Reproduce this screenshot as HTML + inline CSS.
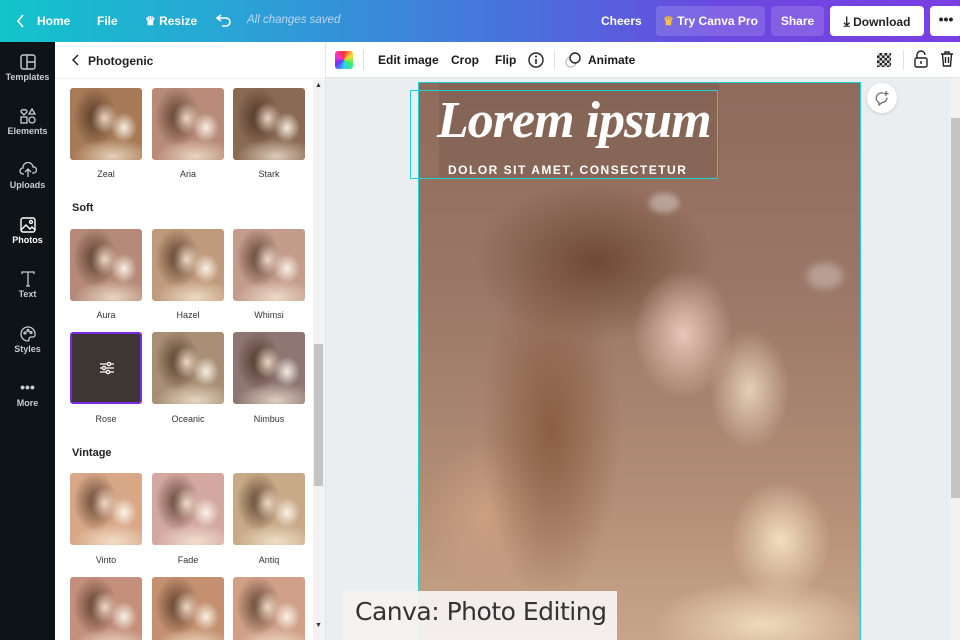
<!DOCTYPE html>
<html><head><meta charset="utf-8">
<style>
*{margin:0;padding:0;box-sizing:border-box}
html,body{width:960px;height:640px;overflow:hidden}
body{position:relative;font-family:"Liberation Sans",sans-serif;background:#ebeef1}
.top{position:absolute;left:0;top:0;width:960px;height:42px;background:linear-gradient(90deg,#13c4cb 0%,#2aa3d6 25%,#4a6fdc 55%,#6b48e0 75%,#7a3fe2 100%);color:#fff;font-size:12px;font-weight:bold}
.top span{position:absolute;top:14px}
.btn{position:absolute;top:6px;height:30px;border-radius:4px;line-height:30px;text-align:center}
.side{position:absolute;left:0;top:42px;width:55px;height:598px;background:#0e1318;color:#c8ccd0;font-size:9px;font-weight:bold;text-align:center}
.side div{position:absolute;left:0;width:55px}
.side svg{display:block;margin:0 auto 2px}
.panel{position:absolute;left:55px;top:42px;width:271px;height:598px;background:#fff;border-right:1px solid #e4e6e8;overflow:hidden}
.t{position:absolute;width:72px;height:72px;border-radius:3px;overflow:hidden;
background:radial-gradient(ellipse 14px 16px at 48% 42%,rgba(255,235,215,.85),transparent),radial-gradient(ellipse 13px 15px at 75% 55%,rgba(255,250,240,.9),transparent),radial-gradient(ellipse 22px 30px at 35% 40%,rgba(60,35,20,.75),transparent),radial-gradient(ellipse 40px 18px at 60% 95%,rgba(255,245,225,.7),transparent),var(--b)}
.lab{position:absolute;width:72px;text-align:center;font-size:9px;color:#333}
.h{position:absolute;left:17px;font-size:11px;font-weight:bold;color:#222}
.tool{position:absolute;left:326px;top:42px;width:634px;height:36px;background:#fff;border-bottom:1px solid #e2e4e7;font-size:12px;color:#1a1a1a;font-weight:bold}
.tool span{position:absolute;top:11px}
.photo{position:absolute;left:418px;top:82px;width:443px;height:560px;border:1px solid #1bd2d6;overflow:hidden;
background:
radial-gradient(ellipse 50px 60px at 82% 82%,rgba(245,225,195,.95),transparent),
radial-gradient(ellipse 110px 45px at 78% 97%,rgba(240,220,190,.95),transparent),
radial-gradient(ellipse 50px 65px at 60% 45%,rgba(240,205,190,.9),transparent),
radial-gradient(ellipse 40px 60px at 75% 55%,rgba(235,215,190,.9),transparent),
radial-gradient(ellipse 70px 170px at 30% 62%,rgba(130,85,55,.8),transparent),
radial-gradient(ellipse 120px 80px at 40% 32%,rgba(105,65,45,.85),transparent),
radial-gradient(ellipse 60px 80px at 15% 78%,rgba(205,160,130,.9),transparent),
linear-gradient(180deg,#8f6b5c 0%,#9c7868 40%,#b48e76 75%,#c8a589 100%)}
</style></head><body>
<div class="top">
<svg style="position:absolute;left:16px;top:14px" width="10" height="14" viewBox="0 0 10 14"><path d="M7 1L2 7l5 6" stroke="#fff" stroke-width="1.6" fill="none"/></svg>
<span style="left:37px">Home</span><span style="left:97px">File</span>
<span style="left:145px">♛ Resize</span>
<svg style="position:absolute;left:216px;top:13px" width="16" height="14" viewBox="0 0 16 14"><path d="M5 2L1 5l4 3M1 5h9a4 4 0 010 8H6" stroke="#fff" stroke-width="1.5" fill="none"/></svg>
<span style="left:247px;font-weight:normal;font-style:italic;color:#b9d8f0;font-size:11.5px">All changes saved</span>
<span style="left:601px">Cheers</span>
<div class="btn" style="left:656px;width:109px;background:rgba(255,255,255,.15)"><span style="position:static;color:#f5c342">♛</span> Try Canva Pro</div>
<div class="btn" style="left:771px;width:53px;background:rgba(255,255,255,.15)">Share</div>
<div class="btn" style="left:830px;width:94px;background:#fff;color:#222"><span style="position:static;font-size:14px">⤓</span> Download</div>
<div class="btn" style="left:930px;width:32px;background:#fff;color:#222;font-size:14px;line-height:26px">•••</div>
</div>
<div class="side">
<div style="top:12px"><svg width="16" height="16" viewBox="0 0 16 16"><rect x="1" y="1" width="14" height="14" rx="2" stroke="#c8ccd0" stroke-width="1.4" fill="none"/><path d="M7 1v14M7 8h8" stroke="#c8ccd0" stroke-width="1.4"/></svg>Templates</div>
<div style="top:66px"><svg width="16" height="16" viewBox="0 0 16 16" fill="none" stroke="#c8ccd0" stroke-width="1.3"><path d="M4 7L1 4a2 2 0 013-2 2 2 0 013 2z"/><path d="M12 1l3 5H9z"/><rect x="1" y="9" width="6" height="6"/><circle cx="12" cy="12" r="3"/></svg>Elements</div>
<div style="top:120px"><svg width="18" height="16" viewBox="0 0 18 16" fill="none" stroke="#c8ccd0" stroke-width="1.3"><path d="M5 12H4a3 3 0 010-6 5 5 0 0110-1 3 3 0 011 6h-2M9 15V8M6 10l3-3 3 3"/></svg>Uploads</div>
<div style="top:175px;color:#fff"><svg width="16" height="16" viewBox="0 0 16 16" fill="none" stroke="#fff" stroke-width="1.4"><rect x="1" y="1" width="14" height="14" rx="2"/><path d="M1 13l5-5 4 4 2-2 3 3"/><circle cx="11" cy="5" r="1.5"/></svg>Photos</div>
<div style="top:229px"><svg width="16" height="16" viewBox="0 0 16 16" fill="none" stroke="#c8ccd0" stroke-width="1.3"><path d="M2 3V1h12v2M8 1v14M6 15h4"/></svg>Text</div>
<div style="top:284px"><svg width="16" height="16" viewBox="0 0 16 16" fill="none" stroke="#c8ccd0" stroke-width="1.3"><path d="M8 1a7 7 0 100 14c1 0 1-1 1-2s1-2 2-2h2a2 2 0 002-2A7 7 0 008 1z"/><circle cx="5" cy="7" r="1"/><circle cx="8" cy="4.5" r="1"/><circle cx="11" cy="6.5" r="1"/></svg>Styles</div>
<div style="top:338px"><div style="position:static;font-size:14px;line-height:14px;margin-bottom:4px">•••</div>More</div>
</div>
<div class="panel">
<svg style="position:absolute;left:17px;top:12px" width="8" height="12" viewBox="0 0 8 12"><path d="M6 1L1 6l5 5" stroke="#222" stroke-width="1.5" fill="none"/></svg>
<div style="position:absolute;left:33px;top:12px;font-size:12px;font-weight:bold;color:#222">Photogenic</div>
<div style="position:absolute;left:0;top:36px;width:271px;height:1px;background:#eceef0"></div>
<div style="position:absolute;left:258px;top:38px;width:12px;height:560px;background:#f2f2f2"></div>
<div style="position:absolute;left:259px;top:302px;width:9px;height:142px;background:#c4c4c4"></div>
<div style="position:absolute;left:260px;top:40px;font-size:7px;color:#333">▲</div>
<div style="position:absolute;left:260px;top:580px;font-size:7px;color:#333">▼</div>

<div class="t" style="left:15px;top:46px;--b:#a77b58"></div><div class="t" style="left:97px;top:46px;--b:#b88a78"></div><div class="t" style="left:178px;top:46px;--b:#8a6a55"></div>
<div class="lab" style="left:15px;top:127px">Zeal</div><div class="lab" style="left:97px;top:127px">Aria</div><div class="lab" style="left:178px;top:127px">Stark</div>
<div class="h" style="top:160px">Soft</div>
<div class="t" style="left:15px;top:187px;--b:#b58a78"></div><div class="t" style="left:97px;top:187px;--b:#c09a7c"></div><div class="t" style="left:178px;top:187px;--b:#c49c8c"></div>
<div class="lab" style="left:15px;top:268px">Aura</div><div class="lab" style="left:97px;top:268px">Hazel</div><div class="lab" style="left:178px;top:268px">Whimsi</div>
<div class="t" style="left:15px;top:290px;border:2px solid #7d2ae8;background:#3d3632"><svg style="position:absolute;left:27px;top:27px" width="16" height="14" viewBox="0 0 16 14" stroke="#fff" stroke-width="1.3" fill="none"><path d="M1 3h14M1 7h14M1 11h14"/><circle cx="10" cy="3" r="1.6" fill="#3d3632"/><circle cx="5" cy="7" r="1.6" fill="#3d3632"/><circle cx="9" cy="11" r="1.6" fill="#3d3632"/></svg></div>
<div class="t" style="left:97px;top:290px;--b:#a88e74"></div><div class="t" style="left:178px;top:290px;--b:#8f7672"></div>
<div class="lab" style="left:15px;top:372px">Rose</div><div class="lab" style="left:97px;top:372px">Oceanic</div><div class="lab" style="left:178px;top:372px">Nimbus</div>
<div class="h" style="top:405px">Vintage</div>
<div class="t" style="left:15px;top:431px;--b:#d8a788"></div><div class="t" style="left:97px;top:431px;--b:#d3a8a0"></div><div class="t" style="left:178px;top:431px;--b:#c8aa88"></div>
<div class="lab" style="left:15px;top:513px">Vinto</div><div class="lab" style="left:97px;top:513px">Fade</div><div class="lab" style="left:178px;top:513px">Antiq</div>
<div class="t" style="left:15px;top:535px;--b:#c4907c"></div><div class="t" style="left:97px;top:535px;--b:#c49070"></div><div class="t" style="left:178px;top:535px;--b:#d0a088"></div>
</div>
<div class="tool">
<div style="position:absolute;left:9px;top:9px;width:18px;height:18px;border-radius:3px;background:conic-gradient(#f33,#fd3,#3e6,#3cf,#63f,#f3c,#f33)"></div>
<div style="position:absolute;left:37px;top:8px;width:1px;height:20px;background:#e0e0e0"></div>
<span style="left:52px">Edit image</span><span style="left:125px">Crop</span><span style="left:169px">Flip</span>
<svg style="position:absolute;left:202px;top:10px" width="16" height="16" viewBox="0 0 16 16"><circle cx="8" cy="8" r="7" stroke="#222" stroke-width="1.4" fill="none"/><path d="M8 7v5" stroke="#222" stroke-width="1.6"/><circle cx="8" cy="4.5" r="1" fill="#222"/></svg>
<div style="position:absolute;left:228px;top:8px;width:1px;height:20px;background:#e0e0e0"></div>
<svg style="position:absolute;left:239px;top:10px" width="16" height="16" viewBox="0 0 16 16" fill="none"><circle cx="6" cy="10" r="5" stroke="#bbb" stroke-width="1.2"/><circle cx="10" cy="6" r="5" stroke="#222" stroke-width="1.4" fill="#fff"/></svg>
<span style="left:262px">Animate</span>
<div style="position:absolute;left:551px;top:11px;width:14px;height:14px;background:repeating-conic-gradient(#222 0 25%,#ddd 0 50%) 0 0/5px 5px"></div>
<div style="position:absolute;left:577px;top:8px;width:1px;height:20px;background:#e0e0e0"></div>
<svg style="position:absolute;left:588px;top:8px" width="14" height="18" viewBox="0 0 14 18" fill="none" stroke="#222" stroke-width="1.4"><path d="M3 8V5a4 4 0 018 0"/><rect x="1" y="8" width="12" height="9" rx="1.5"/><path d="M7 11v3"/></svg>
<svg style="position:absolute;left:614px;top:9px" width="14" height="16" viewBox="0 0 14 16" fill="none" stroke="#222" stroke-width="1.4"><path d="M1 3h12M5 3V1h4v2M2.5 3l1 12h7l1-12M5.5 6v6M8.5 6v6"/></svg>
</div>
<div style="position:absolute;left:950px;top:78px;width:10px;height:562px;background:#f2f2f2"></div>
<div style="position:absolute;left:951px;top:118px;width:9px;height:380px;background:#c4c4c4"></div>
<div class="photo">
<div style="position:absolute;left:230px;top:110px;width:30px;height:20px;border-radius:50%;background:rgba(255,255,255,.35);filter:blur(3px)"></div>
<div style="position:absolute;left:388px;top:180px;width:36px;height:26px;border-radius:50%;background:rgba(255,255,255,.3);filter:blur(4px)"></div>
<div style="position:absolute;left:20px;top:0;width:280px;height:95px;background:rgba(120,90,78,.45)"></div>
<div style="position:absolute;left:18px;top:8px;font-family:'Liberation Serif',serif;font-style:italic;font-weight:bold;font-size:52px;color:#fff;white-space:nowrap;letter-spacing:-1px">Lorem ipsum</div>
<div style="position:absolute;left:29px;top:80px;font-size:12px;font-weight:bold;color:#fff;letter-spacing:1.5px;white-space:nowrap">DOLOR SIT AMET, CONSECTETUR</div>
</div>
<div style="position:absolute;left:410px;top:90px;width:308px;height:89px;border:1.5px solid #1bd2d6"></div>
<div style="position:absolute;left:867px;top:83px;width:30px;height:30px;border-radius:50%;background:#fff;box-shadow:0 1px 3px rgba(0,0,0,.15)"><svg style="position:absolute;left:7px;top:7px" width="16" height="16" viewBox="0 0 16 16" fill="none" stroke="#666" stroke-width="1.2"><path d="M9 3H7a5 5 0 00-2 9.5V15l3-2.5a5 5 0 005-5M12 1v5M9.5 3.5h5"/></svg></div>
<div style="position:absolute;left:343px;top:591px;width:274px;height:49px;background:rgba(245,242,240,.95);font-family:'DejaVu Sans',sans-serif;font-size:25px;color:#333;padding:6px 0 0 12px;white-space:nowrap;letter-spacing:-0.5px">Canva: Photo Editing</div>
</body></html>
